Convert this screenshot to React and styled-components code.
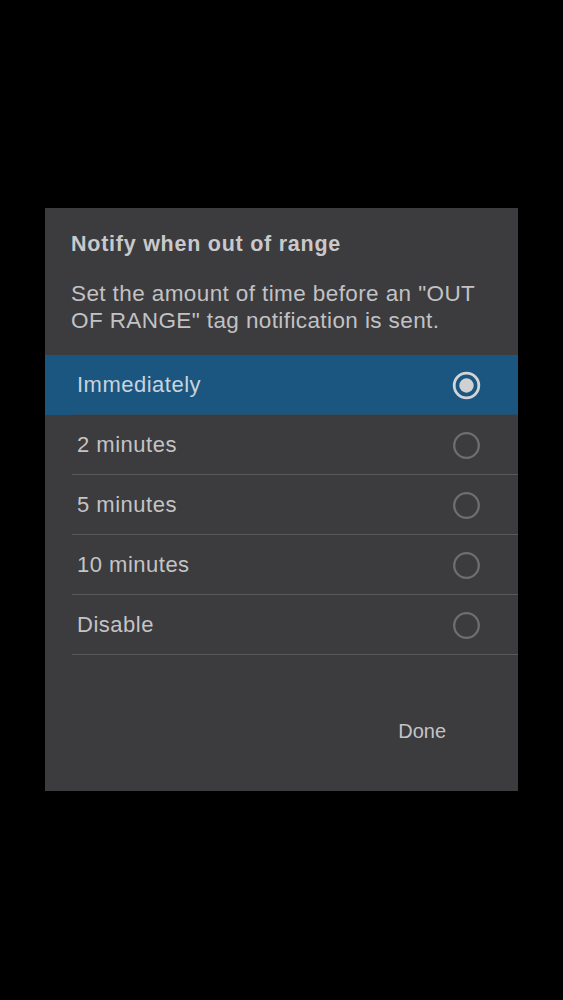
import React, { useState } from "react";
import styled, { createGlobalStyle } from "styled-components";

const Global = createGlobalStyle`
  html, body { margin: 0; padding: 0; background: #000; }
  body { font-family: "Liberation Sans", Arial, sans-serif; }
`;

const Screen = styled.div`
  width: 563px;
  height: 1000px;
  background: #000;
  padding-top: 208px;
  box-sizing: border-box;
`;

const Dialog = styled.div`
  margin-left: 45px;
  width: 473px;
  height: 583px;
  background: #3c3b3e;
  display: flex;
  flex-direction: column;
`;

const Title = styled.h2`
  margin: 22px 0 0 26px;
  font-size: 21.5px;
  line-height: 28px;
  font-weight: 700;
  letter-spacing: 0.75px;
  color: #c9c9cb;
`;

const Description = styled.p`
  margin: 22px 30px 0 26px;
  font-size: 22.5px;
  line-height: 27px;
  letter-spacing: 0.4px;
  color: #c2c2c4;
`;

const List = styled.div`
  margin-top: 21px;
  display: flex;
  flex-direction: column;
`;

const Row = styled.div`
  position: relative;
  height: 60px;
  display: flex;
  align-items: center;
  justify-content: space-between;
  padding: 0 37px 0 32px;
  background: ${(p) => (p.$selected ? "#1b5681" : "transparent")};
  cursor: pointer;
  &::after {
    content: "";
    position: absolute;
    left: 27px;
    right: 0;
    bottom: 0;
    height: 1px;
    background: ${(p) => (p.$selected ? "#2a4c66" : "#58575a")};
  }
`;

const Label = styled.span`
  font-size: 22px;
  letter-spacing: 0.5px;
  color: ${(p) => (p.$selected ? "#c9d3dc" : "#c4c4c6")};
`;

const Radio = ({ checked }) => (
  <svg width="29" height="29" viewBox="0 0 29 29">
    <circle
      cx="14.5"
      cy="14.5"
      r="12.3"
      fill="none"
      stroke={checked ? "#d2d4d6" : "#6e6d70"}
      strokeWidth={checked ? 2.8 : 2.3}
    />
    {checked && <circle cx="14.5" cy="14.5" r="7.2" fill="#d0d1d3" />}
  </svg>
);

const Footer = styled.div`
  display: flex;
  justify-content: flex-end;
  padding: 56px 64px 0 0;
`;

const DoneButton = styled.button`
  background: none;
  border: none;
  padding: 0 8px;
  height: 40px;
  font-family: inherit;
  font-size: 20px;
  color: #c4c4c6;
  cursor: pointer;
`;

const options = ["Immediately", "2 minutes", "5 minutes", "10 minutes", "Disable"];

export default function App() {
  const [sel, setSel] = useState(0);
  return (
    <>
      <Global />
      <Screen>
        <Dialog>
          <Title>Notify when out of range</Title>
          <Description>
            Set the amount of time before an "OUT OF RANGE" tag notification is sent.
          </Description>
          <List>
            {options.map((o, i) => (
              <Row key={o} $selected={i === sel} onClick={() => setSel(i)}>
                <Label $selected={i === sel}>{o}</Label>
                <Radio checked={i === sel} />
              </Row>
            ))}
          </List>
          <Footer>
            <DoneButton>Done</DoneButton>
          </Footer>
        </Dialog>
      </Screen>
    </>
  );
}
